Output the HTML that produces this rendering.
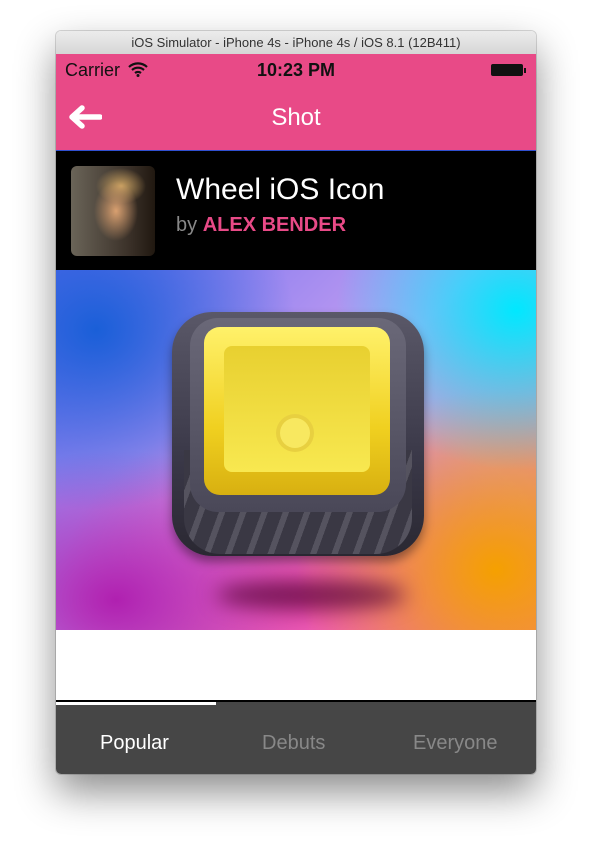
<!DOCTYPE html>
<html><head><style>
body{margin:0;width:592px;height:854px;background:#fff;position:relative;overflow:hidden;font-family:"Liberation Sans",Arial,sans-serif}
.win{position:absolute;left:56px;top:31px;width:480px;height:743px;border-radius:5px;overflow:hidden;box-shadow:0 18px 40px rgba(0,0,0,.45),0 0 0 1px rgba(0,0,0,.15)}
.title{height:23px;background:linear-gradient(#ececec,#d6d6d6);font-size:13px;color:#333;text-align:center;line-height:23px;border-bottom:1px solid #b0b0b0}
.pink{position:absolute;left:0;top:23px;width:480px;height:96px;background:#e84a87}
.ab{position:absolute;color:#111;font-size:18px}
.hdr{position:absolute;top:119px;left:0;width:480px;height:120px;background:#000;border-top:1px solid #3050d0}
.img{position:absolute;top:239px;left:0;width:480px;height:360px;overflow:hidden;background:
radial-gradient(ellipse 200px 180px at 40px 60px,#1a5fd8,transparent),
radial-gradient(ellipse 180px 160px at 460px 40px,#00e8ff,transparent),
radial-gradient(ellipse 200px 180px at 440px 300px,#f5a000,transparent),
radial-gradient(ellipse 200px 150px at 60px 330px,#b020b0,transparent),
radial-gradient(ellipse 250px 200px at 250px 330px,#f050b0,transparent),
linear-gradient(135deg,#6a6cf0,#c8a0f0 50%,#f08080)}
.tab{position:absolute;top:669px;left:0;width:480px;height:74px;background:#464646;border-top:2px solid #000}
.tab span{position:absolute;top:30px;font-size:20px}
</style></head><body>
<div class="win">
<div class="title">iOS Simulator - iPhone 4s - iPhone 4s / iOS 8.1 (12B411)</div>
<div class="pink">
<div class="ab" style="left:9px;top:6px">Carrier</div>
<svg style="position:absolute;left:72px;top:8px" width="20" height="15" viewBox="0 0 20 15"><path d="M1 5a13 13 0 0 1 18 0M4 8a9 9 0 0 1 12 0M7 11a5 5 0 0 1 6 0" stroke="#111" stroke-width="2.2" fill="none"/><circle cx="10" cy="13.5" r="1.5" fill="#111"/></svg>
<div class="ab" style="left:201px;top:6px;font-weight:bold">10:23 PM</div>
<div style="position:absolute;left:435px;top:10px;width:32px;height:12px;background:#111;border-radius:2px"></div><div style="position:absolute;left:468px;top:14px;width:2px;height:5px;background:#111"></div>
<svg style="position:absolute;left:12px;top:50px" width="34" height="26" viewBox="0 0 34 26"><path d="M32 13H5M14 4L4 13l10 9" stroke="#fff" stroke-width="5.5" fill="none" stroke-linecap="round" stroke-linejoin="round"/></svg>
<div style="position:absolute;left:0;width:480px;top:50px;text-align:center;color:#fff;font-size:24px">Shot</div>
</div>
<div class="hdr">
<div style="position:absolute;left:15px;top:15px;width:84px;height:90px;border-radius:6px;background:radial-gradient(ellipse 22px 30px at 45px 45px,#d9a070,transparent),radial-gradient(ellipse 25px 18px at 50px 20px,#c8a060,transparent),linear-gradient(90deg,#6a6458,#3a3028 70%,#201810)"></div>
<div style="position:absolute;left:120px;top:22px;color:#fff;font-size:30px">Wheel iOS Icon</div>
<div style="position:absolute;left:120px;top:63px;color:#888;font-size:20px">by <b style="color:#e84a87">ALEX BENDER</b></div>
</div>
<div class="img">
<div style="position:absolute;left:160px;top:310px;width:190px;height:30px;border-radius:50%;background:rgba(80,0,50,.7);filter:blur(10px)"></div>
<div style="position:absolute;left:116px;top:42px;width:252px;height:244px;border-radius:40px;background:linear-gradient(#5a5868,#3a3848 60%,#2a2832);box-shadow:0 6px 10px rgba(0,0,0,.4)"></div>
<div style="position:absolute;left:128px;top:180px;width:228px;height:104px;border-radius:0 0 36px 36px;background:repeating-linear-gradient(110deg,#3a3844 0 14px,#55535f 14px 20px)"></div>
<div style="position:absolute;left:134px;top:48px;width:216px;height:194px;border-radius:28px;background:linear-gradient(#6a6878,#4a4858)"></div>
<div style="position:absolute;left:148px;top:57px;width:186px;height:168px;border-radius:16px;background:linear-gradient(#fff16a,#f0d020 60%,#d8b010)"></div>
<div style="position:absolute;left:168px;top:76px;width:146px;height:126px;border-radius:8px;background:linear-gradient(#e8d030,#f8e850)"></div>
<div style="position:absolute;left:224px;top:148px;width:30px;height:30px;border-radius:50%;background:#f8e860;box-shadow:0 0 0 4px #e8d040"></div>
</div>
<div style="position:absolute;top:599px;left:0;width:480px;height:70px;background:#fff"></div>
<div class="tab">
<div style="position:absolute;left:0;top:0;width:160px;height:3px;background:#fff"></div>
<span style="left:44px;color:#fff">Popular</span>
<span style="left:206px;color:#888">Debuts</span>
<span style="left:357px;color:#888">Everyone</span>
</div>
</div>
</body></html>
